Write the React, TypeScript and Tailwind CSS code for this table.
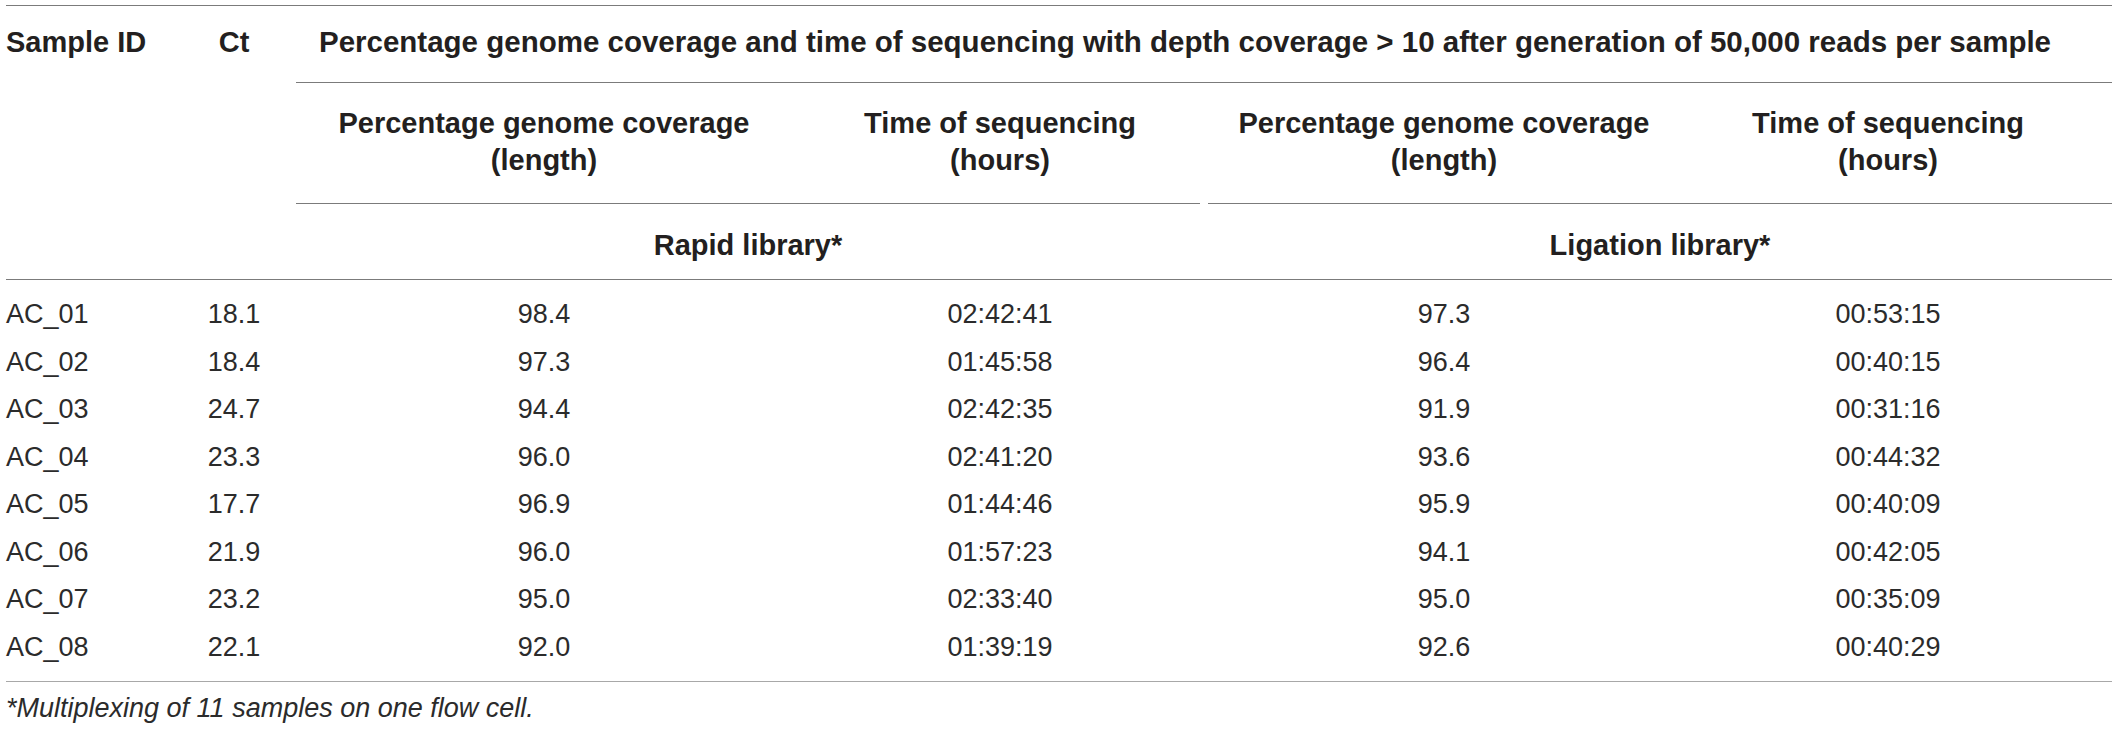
import React from "react";

const rows: string[][] = [
  ["AC_01", "18.1", "98.4", "02:42:41", "97.3", "00:53:15"],
  ["AC_02", "18.4", "97.3", "01:45:58", "96.4", "00:40:15"],
  ["AC_03", "24.7", "94.4", "02:42:35", "91.9", "00:31:16"],
  ["AC_04", "23.3", "96.0", "02:41:20", "93.6", "00:44:32"],
  ["AC_05", "17.7", "96.9", "01:44:46", "95.9", "00:40:09"],
  ["AC_06", "21.9", "96.0", "01:57:23", "94.1", "00:42:05"],
  ["AC_07", "23.2", "95.0", "02:33:40", "95.0", "00:35:09"],
  ["AC_08", "22.1", "92.0", "01:39:19", "92.6", "00:40:29"],
];

export default function App() {
  return (
    <div className="w-[2118px] h-[730px] bg-white px-[6px] pt-[5px] text-[#231f20] font-['Liberation_Sans',Arial,sans-serif]">
      <div className="h-px bg-[#7b7b7b]" />
      <div className="grid grid-cols-[166px_124px_496px_408px_8px_472px_432px] grid-rows-[76px_1px_120px_1px_75px_1px] text-[29px] font-bold leading-[32px]">
        <div className="col-start-1 row-start-1 row-span-5 pt-[20px] whitespace-nowrap">Sample ID</div>
        <div className="col-start-2 row-start-1 row-span-5 pt-[20px] text-center">Ct</div>
        <div className="col-start-3 col-span-5 row-start-1 pt-[20px] pr-[38px] text-center whitespace-nowrap text-[29.5px]">
          Percentage genome coverage and time of sequencing with depth coverage &gt; 10 after generation of 50,000 reads per sample
        </div>
        <div className="col-start-3 col-span-5 row-start-2 bg-[#7b7b7b]" />
        <div className="col-start-3 row-start-3 pt-[22px] text-center leading-[37px] whitespace-nowrap">
          Percentage genome coverage
          <br />
          (length)
        </div>
        <div className="col-start-4 row-start-3 pt-[22px] pl-[8px] text-center leading-[37px] whitespace-nowrap">
          Time of sequencing
          <br />
          (hours)
        </div>
        <div className="col-start-6 row-start-3 pt-[22px] text-center leading-[37px] whitespace-nowrap">
          Percentage genome coverage
          <br />
          (length)
        </div>
        <div className="col-start-7 row-start-3 pt-[22px] pr-[16px] text-center leading-[37px] whitespace-nowrap">
          Time of sequencing
          <br />
          (hours)
        </div>
        <div className="col-start-3 col-span-2 row-start-4 bg-[#7b7b7b]" />
        <div className="col-start-6 col-span-2 row-start-4 bg-[#7b7b7b]" />
        <div className="col-start-3 col-span-2 row-start-5 pt-[25px] text-center">Rapid library*</div>
        <div className="col-start-6 col-span-2 row-start-5 pt-[25px] text-center">Ligation library*</div>
        <div className="col-start-1 col-span-7 row-start-6 bg-[#7b7b7b]" />
      </div>
      <div className="pt-[11px] pb-[10px] text-[27px] leading-[47.5px] text-[#2b2b2b]">
        {rows.map((r) => (
          <div key={r[0]} className="grid grid-cols-[166px_124px_496px_408px_8px_472px_432px]">
            <div>{r[0]}</div>
            <div className="text-center">{r[1]}</div>
            <div className="text-center">{r[2]}</div>
            <div className="text-center pl-[8px]">{r[3]}</div>
            <div />
            <div className="text-center">{r[4]}</div>
            <div className="text-center pr-[16px]">{r[5]}</div>
          </div>
        ))}
      </div>
      <div className="h-px bg-[#a8a8a8]" />
      <div className="pt-[10px] text-[27px] leading-[32px] italic text-[#2b2b2b]">*Multiplexing of 11 samples on one flow cell.</div>
    </div>
  );
}
